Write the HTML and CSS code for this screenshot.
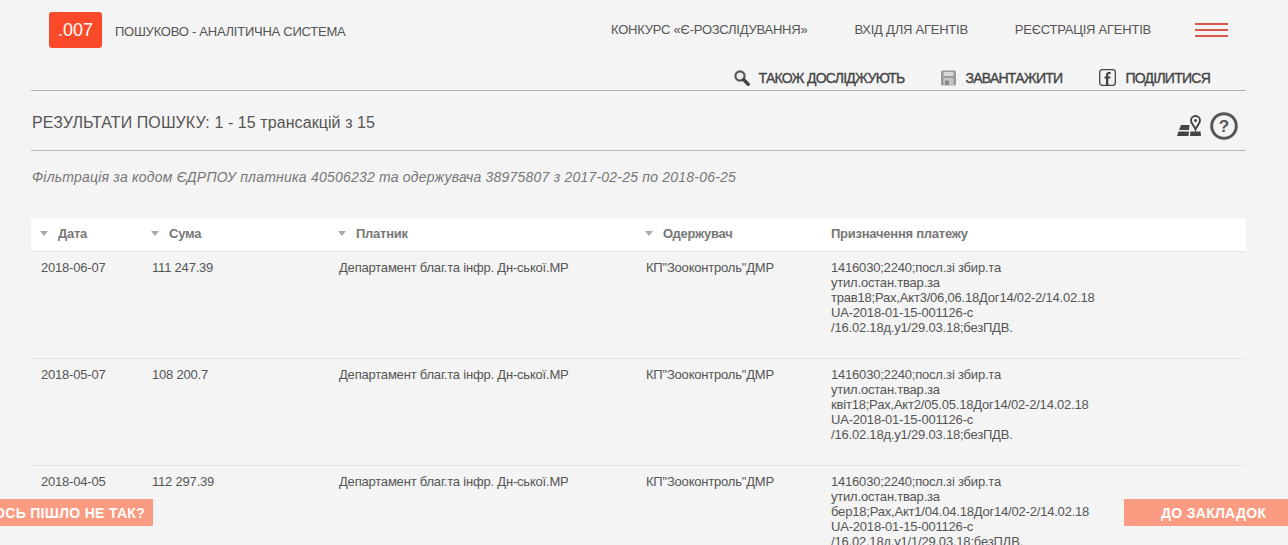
FILE: index.html
```html
<!DOCTYPE html>
<html lang="uk">
<head>
    <meta charset="UTF-8">
    <title>.007 Результати пошуку</title>
    <link rel="stylesheet" href="styles.css">
</head>
<body>

<header class="top-bar">
    <div class="brand">
        <a class="logo" href="#">.007</a>
        <span class="brand-title">ПОШУКОВО - АНАЛІТИЧНА СИСТЕМА</span>
    </div>
    <nav class="top-nav">
        <a href="#">КОНКУРС «Є-РОЗСЛІДУВАННЯ»</a>
        <a href="#">ВХІД ДЛЯ АГЕНТІВ</a>
        <a href="#">РЕЄСТРАЦІЯ АГЕНТІВ</a>
        <a class="burger" href="#"><span></span><span></span><span></span></a>
    </nav>
</header>

<main class="content">
    <div class="tools">
        <a href="#">
            <svg class="tool-icon" width="16" height="16" viewBox="0 0 16 16">
                <circle cx="6" cy="6" r="4.6" fill="#ececec" stroke="#555" stroke-width="2.2"/>
                <path d="M9.5 9.5 L14.2 14.2" stroke="#444" stroke-width="3.4" stroke-linecap="round"/>
            </svg>
            ТАКОЖ ДОСЛІДЖУЮТЬ
        </a>
        <a href="#">
            <svg class="tool-icon" width="15" height="16" viewBox="0 0 15 16">
                <rect x="0" y="0.5" width="15" height="15" rx="1.5" fill="#9a9a9a"/>
                <rect x="2.500" y="2" width="10" height="4" fill="#d8d8d8"/>
                <rect x="2.500" y="8" width="10" height="7" fill="#c4c4c4"/>
                <rect x="4" y="10.500" width="4" height="4.500" fill="#8a8a8a"/>
            </svg>
            ЗАВАНТАЖИТИ
        </a>
        <a href="#">
            <svg class="tool-icon" width="17" height="17" viewBox="0 0 17 17">
                <rect x="0.7" y="0.7" width="15.6" height="15.6" rx="2.5" fill="none" stroke="#444" stroke-width="1.3"/>
                <path d="M9.3 16 V9.6 H11.3 L11.6 7.4 H9.3 V6.1 C9.3 5.4 9.6 5 10.4 5 H11.7 V3 H9.9 C8 3 7 4.1 7 5.8 V7.4 H5.4 V9.6 H7 V16 Z" fill="#444"/>
            </svg>
            ПОДІЛИТИСЯ
        </a>
    </div>

    <div class="result-head">
        <h2>РЕЗУЛЬТАТИ ПОШУКУ: 1 - 15 трансакцій з 15</h2>
        <div class="result-icons">
            <svg width="24" height="22" viewBox="0 0 24 22">
                <path d="M4 10 H12.500 L12 15 H2 Z M1.500 16.500 H12 L11.500 21 H0 Z M13.500 16.500 H23.500 L24 21 H13 Z" fill="#444"/>
                <path d="M18.500 1 C15.700 1 14 3 14 5.400 C14 8.400 17.200 10.800 18.500 14.500 C19.800 10.800 23 8.400 23 5.400 C23 3 21.300 1 18.500 1 Z" fill="none" stroke="#444" stroke-width="1.900"/>
                <circle cx="18.500" cy="5.500" r="1.500" fill="#444"/>
            </svg>
            <svg width="28" height="28" viewBox="0 0 28 28">
                <circle cx="14" cy="14" r="12.300" fill="none" stroke="#555" stroke-width="3"/>
                <text class="help-mark" x="14" y="20" text-anchor="middle">?</text>
            </svg>
        </div>
    </div>

    <p class="filter-note">Фільтрація за кодом ЄДРПОУ платника 40506232 та одержувача 38975807 з 2017-02-25 по 2018-06-25</p>

    <table class="results">
        <thead>
            <tr>
                <th class="col-date"><i class="sort"></i>Дата</th>
                <th class="col-sum"><i class="sort"></i>Сума</th>
                <th class="col-payer"><i class="sort"></i>Платник</th>
                <th class="col-receiver"><i class="sort"></i>Одержувач</th>
                <th>Призначення платежу</th>
            </tr>
        </thead>
        <tbody>
            <tr>
                <td>2018-06-07</td>
                <td>111 247.39</td>
                <td>Департамент благ.та інфр. Дн-ської.МР</td>
                <td>КП"Зооконтроль"ДМР</td>
                <td>1416030;2240;посл.зі збир.та<br>утил.остан.твар.за<br>трав18;Рах,Акт3/06,06.18Дог14/02-2/14.02.18<br>UA-2018-01-15-001126-c<br>/16.02.18д.у1/29.03.18;безПДВ.</td>
            </tr>
            <tr>
                <td>2018-05-07</td>
                <td>108 200.7</td>
                <td>Департамент благ.та інфр. Дн-ської.МР</td>
                <td>КП"Зооконтроль"ДМР</td>
                <td>1416030;2240;посл.зі збир.та<br>утил.остан.твар.за<br>квіт18;Рах,Акт2/05.05.18Дог14/02-2/14.02.18<br>UA-2018-01-15-001126-c<br>/16.02.18д.у1/29.03.18;безПДВ.</td>
            </tr>
            <tr>
                <td>2018-04-05</td>
                <td>112 297.39</td>
                <td>Департамент благ.та інфр. Дн-ської.МР</td>
                <td>КП"Зооконтроль"ДМР</td>
                <td>1416030;2240;посл.зі збир.та<br>утил.остан.твар.за<br>бер18;Рах,Акт1/04.04.18Дог14/02-2/14.02.18<br>UA-2018-01-15-001126-c<br>/16.02.18д.у1/1/29.03.18;безПДВ.</td>
            </tr>
        </tbody>
    </table>
</main>

<a class="side-btn side-left" href="#"><span>ЩОСЬ ПІШЛО НЕ ТАК?</span></a>
<a class="side-btn side-right" href="#">ДО ЗАКЛАДОК</a>

</body>
</html>
```

FILE: styles.css
```css
html, body {
    margin: 0;
    padding: 0;
    height: 100%;
    overflow: hidden;
    background-color: #f4f4f4;
    color: #444444;
    font-family: "Liberation Sans", Arial, sans-serif;
}

a {
    color: inherit;
    text-decoration: none;
}

/* Верхняя панель */
.top-bar {
    display: flex;
    justify-content: space-between;
    align-items: center;
    height: 36px;
    padding: 12px 60px 0 49px;
}

.brand {
    display: flex;
    align-items: center;
    gap: 13px;
}

.logo {
    display: block;
    width: 53px;
    height: 36px;
    line-height: 36px;
    text-align: center;
    font-size: 18px;
    color: #ffffff;
    background-color: #fb4a2a;
    border-radius: 3px;
}

.brand-title {
    font-size: 13px;
    letter-spacing: -0.25px;
    color: #555555;
    margin-top: 2px;
}

.top-nav {
    display: flex;
    align-items: center;
    gap: 47px;
    font-size: 13px;
    letter-spacing: -0.23px;
    color: #555555;
    margin-top: -1px;
}

.burger {
    display: flex;
    flex-direction: column;
    gap: 4px;
    width: 33px;
    margin-left: -3px;
}

.burger span {
    display: block;
    height: 2px;
    background-color: #d9584a;
}

.content {
    margin: 0 42px 0 31px;
}

/* Инструменты */
.tools {
    display: flex;
    justify-content: flex-end;
    align-items: center;
    gap: 37px;
    height: 42px;
    padding-right: 36px;
    border-bottom: 1px solid #b0b0b0;
    font-size: 14px;
    letter-spacing: -0.75px;
    -webkit-text-stroke: 0.35px #444444;
}

.tools a {
    display: flex;
    align-items: center;
    gap: 9px;
    padding-top: 17px;
    line-height: 20px;
}

.tool-icon {
    flex: none;
}

.result-head {
    display: flex;
    justify-content: space-between;
    align-items: center;
    height: 59px;
    border-bottom: 1px solid #b9b9b9;
}

.result-head h2 {
    margin: 0;
    padding: 5px 0 0 1px;
    font-size: 16px;
    font-weight: normal;
    letter-spacing: 0.08px;
    color: #555555;
}

.result-icons {
    display: flex;
    align-items: center;
    gap: 9px;
    padding: 11px 8px 0 0;
}

.help-mark {
    font-size: 17px;
    font-weight: bold;
    fill: #555555;
    font-family: "Liberation Sans", Arial, sans-serif;
}

.filter-note {
    margin: 18px 0 32px;
    padding-left: 1px;
    font-size: 14px;
    line-height: 17px;
    font-style: italic;
    letter-spacing: 0.21px;
    color: #777777;
}

/* Таблица */
.results {
    width: 100%;
    border-collapse: collapse;
    table-layout: fixed;
    font-size: 13px;
    line-height: 15px;
}

.results th {
    height: 31px;
    padding: 0 0 2px 10px;
    text-align: left;
    font-weight: bold;
    letter-spacing: -0.25px;
    color: #777777;
    background-color: #ffffff;
    border-bottom: 1px solid #e6e6e6;
}

.col-date { width: 101px; }
.col-sum { width: 177px; }
.col-payer { width: 297px; }
.col-receiver { width: 175px; }

.sort {
    display: inline-block;
    width: 0;
    height: 0;
    margin-right: 10px;
    margin-left: -1px;
    vertical-align: 2px;
    border-left: 4px solid transparent;
    border-right: 4px solid transparent;
    border-top: 5px solid #aaaaaa;
}

.results td {
    height: 107px;
    box-sizing: border-box;
    padding: 8px 0 0 10px;
    vertical-align: top;
    color: #555555;
    letter-spacing: -0.2px;
    border-bottom: 1px solid #e6e6e6;
}

/* Кнопки по краям */
.side-btn {
    position: fixed;
    bottom: 19px;
    height: 27px;
    line-height: 28px;
    font-size: 14px;
    font-weight: bold;
    letter-spacing: 0.3px;
    color: #ffffff;
    background-color: #fb9b82;
    white-space: nowrap;
}

.side-left {
    left: 0;
    display: flex;
    justify-content: flex-end;
    width: 153px;
    box-sizing: border-box;
    padding-right: 8px;
    overflow: hidden;
}

.side-left span {
    flex: none;
}

.side-right {
    right: 0;
    width: 127px;
    padding-left: 37px;
}
```
